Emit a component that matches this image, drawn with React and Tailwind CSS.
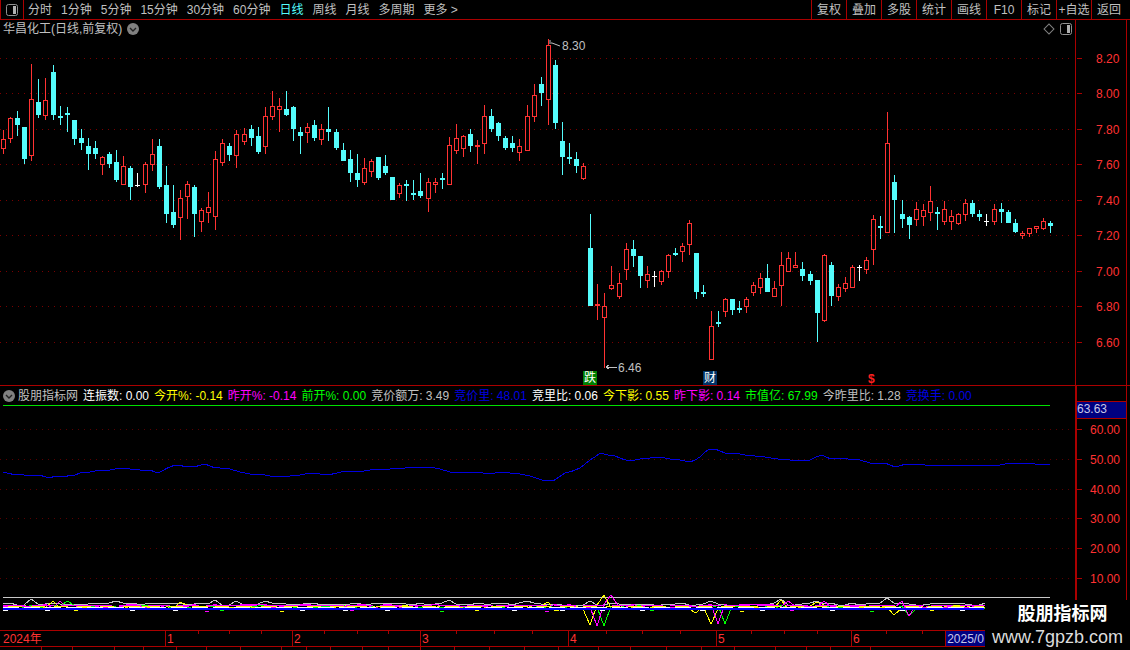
import React from 'react';

const RED = '#ff3232';
const LINE = 'border-[#aa0000]';

// candle rows: type, wick top, body top, body bottom, wick bottom (measured on 3x crops)
const groups = [
  [60, `r 210 238 266 281,r 172 175 238 248,c 153 175 195 228,c 201 201 297 312,r 12 118 288 303,c 57 126 165 174,r 55 121 167 180,c 15 36 165 180,c 138 168 174 195,c 141 159 165 216,c 180 180 237 255,c 207 234 249 270,c 234 258 282 330,c 243 264 282 297,r 288 291 315 345,c 276 282 312 324,c 270 306 360 366,r 288 318 375 375,c 318 324 381 420,w 339 376 379 381,r 306 312 375 399,r 237 282 315 333,c 237 258 381 387,c 318 375 462 489,c 375 456 495 504,r 390 414 474 540,r 363 372 411 477,c 375 381 462 531,r 444 450 486 516,r 396 441 459 489,r 273 297 471 510,r 237 249 309 318,c 249 258 285 303,r 210 222 288 324,r 204 222 246 255,c 195 207 234 258,c 201 228 276 282,r 141 168 261 282,r 93 138 171 180,r 114 138 150 216,c 93 147 165 168,c 138 141 207 243`],
  [35, `c 276 291 303 357,r 264 276 294 324,c 255 270 309 318,r 267 282 315 330,c 216 282 291 318,c 282 291 339 345,c 324 345 378 378,c 345 372 414 441,c 357 414 435 456,r 369 399 444 450,r 372 378 411 426,c 366 366 429 435,c 360 393 414 420,c 426 426 495 495,r 444 450 477 489,c 435 447 450 498,c 435 474 477 495,c 414 468 483 489,r 429 441 492 531,r 429 441 450 474,c 414 429 435 462,r 306 330 450 450,r 267 309 348 357,r 300 303 342 366,c 282 297 333 351,r 315 330 336 388,r 210 243 327 357,c 222 243 282 291,c 261 264 303 318,c 303 309 339 345,c 303 324 339 351,r 312 333 354 378,r 210 243 348 348,r 147 180 246 261,c 126 147 174 213,r 12 30 195 270,c 75 90 264 282,c 261 318 366 420,c 324 366 372 387,c 351 372 393 414,r 384 393 432 435`],
  [205, `c 27 129 303 303,r 237 297 304 345,r 264 303 339 490,r 183 240 252 255,r 204 234 276 282,r 114 132 195 225,c 105 132 153 186,c 153 153 213 249,r 183 207 228 249,w 198 213 216 246,r 195 198 231 240,r 147 150 201 219,c 129 144 150 153,r 114 123 141 171,r 45 54 120 150,c 144 144 261 282,c 240 261 267 276,r 318 363 465 465,c 318 351 357 366,r 279 282 321 336,c 282 282 315 330,c 288 309 315 324,r 276 282 306 324,r 231 240 264 273,r 204 219 249 267,c 177 219 261 261,r 228 249 276 276,r 141 180 243 303,r 141 159 201 201,r 141 180 189 189,c 171 192 213 228,c 198 207 228 240,c 225 225 324 411,r 147 150 348 351,c 171 180 273 303,r 237 246 276 288,r 216 234 252 261,r 180 186 249 249,w 180 186 189 228,r 156 165 195 207`],
  [105, `r 330 342 435 480,c 333 363 369 402,r 21 114 384 384,c 210 231 285 384,c 285 327 342 369,c 333 336 360 402,r 291 312 345 363,r 297 315 336 363,r 243 288 324 348,c 306 321 327 375,r 288 312 351 360,r 315 333 351 375,r 324 327 357 360,r 282 294 330 348,c 285 294 327 336,c 315 327 336 348,w 327 348 351 363,r 297 312 351 360,c 294 312 321 354,c 315 321 354 354,c 342 354 381 384,r 378 384 393 402,r 369 369 387 396,r 363 363 372 384,r 339 348 372 375,c 348 354 363 384`],
];

const candles = groups.flatMap(([off, rows]) =>
  rows.split(',').map((row) => {
    const [t, a, b, c, d] = row.split(' ');
    const y = (v) => Math.round(off + Number(v) / 3);
    return { t, hi: y(a), top: y(b), bot: y(c), lo: y(d) };
  })
);

const blueKnots = '3,472 20,474 35,475 50,478 60,476 75,475 90,472 110,470 130,469 150,470 160,472 175,465 190,466 205,464 220,468 240,472 260,474 280,476 300,475 320,474 345,471 370,470 390,469 420,467 440,469 460,472 490,474 510,473 530,476 553,481 565,473 580,468 590,460 600,453 615,456 630,461 650,458 670,459 690,462 700,457 710,449 725,453 745,455 765,457 790,460 810,460 822,455 835,458 860,460 880,463 895,467 910,464 940,465 970,466 1000,465 1020,463 1050,465'
  .split(' ')
  .map((p) => p.split(',').map(Number));

const noise = (i, seed) => {
  const v = Math.sin(i * 12.9898 + seed) * 43758.5453;
  return v - Math.floor(v);
};

// knots read off the picture, with the day-to-day wiggle put back in
const blueLine = blueKnots
  .flatMap(([x, y], k) => {
    const next = blueKnots[k + 1];
    if (!next) return [`${x},${y}`];
    const mid = (x + next[0]) / 2;
    const midY = Math.round((y + next[1]) / 2 + (noise(k, 7) - 0.5) * 3);
    return [`${x},${y}`, `${mid},${midY}`];
  })
  .join(' ');

const wave = (base, amp, seed, bumps) => {
  const pts = [];
  for (let i = 0; i < 140; i++) {
    const y = bumps[i] ?? base + Math.round((noise(i, seed) - 0.5) * amp);
    pts.push(`${Math.round(3 + 7.075 * i)},${y}`);
  }
  return pts.join(' ');
};

const oscillators = [
  ['#c0c0c0', wave(604, 3, 1, { 4: 599, 16: 601, 30: 600, 33: 601, 37: 601, 63: 600, 74: 601, 83: 601, 100: 601, 110: 599, 115: 601, 125: 598 })],
  ['#ffff00', wave(607, 5, 2, { 7: 601, 25: 602, 77: 602, 78: 611, 83: 625, 85: 595, 98: 613, 100: 624, 110: 600, 115: 602, 126: 615 })],
  ['#00ff00', wave(607, 5, 3, { 9: 601, 85: 626, 102: 624, 128: 616 })],
  ['#ff00ff', wave(606, 4, 4, { 8: 601, 84: 626, 86: 595, 101: 624, 111: 601, 116: 601, 127: 601, 128: 616 })],
];

const mainTicks = [['8.20', 58], ['8.00', 93], ['7.80', 129], ['7.60', 164], ['7.40', 200], ['7.20', 235], ['7.00', 271], ['6.80', 306], ['6.60', 342]];
const subTicks = [['60.00', 429], ['50.00', 459], ['40.00', 489], ['30.00', 518], ['20.00', 548], ['10.00', 578]];

const legend = [
  ['连振数: 0.00', 'text-white'],
  ['今开%: -0.14', 'text-[#ffff00]'],
  ['昨开%: -0.14', 'text-[#ff00ff]'],
  ['前开%: 0.00', 'text-[#00ff00]'],
  ['竞价额万: 3.49', 'text-[#c0c0c0]'],
  ['竞价里: 48.01', 'text-[#0000e0]'],
  ['竞里比: 0.06', 'text-white'],
  ['今下影: 0.55', 'text-[#ffff00]'],
  ['昨下影: 0.14', 'text-[#ff00ff]'],
  ['市值亿: 67.99', 'text-[#00ff00]'],
  ['今昨里比: 1.28', 'text-[#c0c0c0]'],
  ['竞换手: 0.00', 'text-[#0000e0]'],
];

const periods = ['分时', '1分钟', '5分钟', '15分钟', '30分钟', '60分钟', '日线', '周线', '月线', '多周期', '更多 >'];
const tools = ['复权', '叠加', '多股', '统计', '画线', 'F10', '标记', '+自选', '返回'];
const months = [['2024年', 165], ['1', 127], ['2', 128], ['3', 148], ['4', 148], ['5', 135], ['6', 94]];
const minorTicks = [198, 229, 261, 324, 357, 388, 456, 494, 532, 606, 642, 680, 751, 784, 817, 886, 922];
const stripCells = [42, 31, 42, 29, 33, 30, 34, 41, 25, 24, 32, 26, 32, 34, 35, 35, 34, 40, 32, 36, 35, 33, 41, 31, 24, 40];

const Toggle = ({ className }) => (
  <svg viewBox="0 0 12 12" className={className}>
    <rect x="0.5" y="0.5" width="11" height="11" rx="2" fill="none" stroke="#909090" />
    <rect x="7" y="2" width="3" height="8" fill="#b0b0b0" />
  </svg>
);

const Chevron = () => (
  <svg viewBox="0 0 12 12" className="w-3 h-3 shrink-0">
    <circle cx="6" cy="6" r="6" fill="#808080" />
    <path d="M3 5l3 3 3-3" fill="none" stroke="#202020" strokeWidth="1.4" />
  </svg>
);

const Candle = ({ c, i }) => {
  const x = Math.round(3 + 7.075 * i);
  if (c.t === 'w') {
    return (
      <g fill="#ffffff">
        <rect x={x} y={c.hi} width="1" height={c.lo - c.hi} />
        <rect x={x - 2} y={c.top} width="5" height="1" />
      </g>
    );
  }
  const color = c.t === 'r' ? RED : '#54fcfc';
  return (
    <g>
      <rect x={x} y={c.hi} width="1" height={c.lo - c.hi} fill={color} />
      {c.t === 'r' ? (
        <rect x={x - 1.5} y={c.top + 0.5} width="4" height={Math.max(c.bot - c.top - 1, 1)} fill="#000" stroke={color} />
      ) : (
        <rect x={x - 2} y={c.top} width="5" height={Math.max(c.bot - c.top, 2)} fill={color} />
      )}
    </g>
  );
};

const MainChart = () => (
  <svg viewBox="0 20 1074 365" className="w-[1074px] h-[365px] block" shapeRendering="crispEdges">
    {mainTicks.map(([, y]) => (
      <line key={y} x1="0" x2="1074" y1={y + 0.5} y2={y + 0.5} stroke="#7a0000" strokeDasharray="1 5" />
    ))}
    {candles.map((c, i) => <Candle key={i} c={c} i={i} />)}
    <path d="M549 41h2M549 43h3l8 3" fill="none" stroke="#c0c0c0" shapeRendering="auto" />
    <text x="562" y="50" fill="#c0c0c0" fontSize="12">8.30</text>
    <path d="M606 367h11M606 367l3-2M606 367l3 2" fill="none" stroke="#c0c0c0" />
    <text x="618" y="372" fill="#c0c0c0" fontSize="12">6.46</text>
  </svg>
);

const SubChart = () => (
  <svg viewBox="0 405 1074 225" className="w-[1074px] h-[225px] block" shapeRendering="crispEdges">
    {subTicks.map(([, y]) => (
      <line key={y} x1="0" x2="1074" y1={y + 0.5} y2={y + 0.5} stroke="#5a0000" strokeDasharray="1 5" />
    ))}
    <line x1="3" x2="1050" y1="405.5" y2="405.5" stroke="#00e000" />
    <polyline points={blueLine} fill="none" stroke="#0000e0" />
    <line x1="3" x2="1050" y1="597.5" y2="597.5" stroke="#c8c8c8" />
    {oscillators.map(([color, pts]) => (
      <polyline key={color} points={pts} fill="none" stroke={color} />
    ))}
    <line x1="3" x2="984" y1="605.5" y2="605.5" stroke="#ff00ff" strokeDasharray="22 7" />
    <line x1="8" x2="984" y1="606.5" y2="606.5" stroke="#ffff00" strokeDasharray="14 9" />
    <line x1="3" x2="984" y1="607.5" y2="607.5" stroke="#ffffff" strokeDasharray="16 5" />
    <line x1="3" x2="984" y1="609" y2="609" stroke="#0000ff" strokeWidth="2" />
    {[3, 45, 130, 173, 300, 343, 385, 512, 560, 600, 640, 700, 760, 830, 900, 960].map((x) => (
      <rect key={x} x={x} y="610" width="5" height="1" fill="#ffffff" />
    ))}
    {[74, 205, 220, 280, 350, 440, 475, 545, 650, 740, 790, 870, 930].map((x, i) => (
      <rect key={x} x={x} y={610 + (i % 2)} width="4" height="1" fill={['#ffff00', '#ff00ff', '#00ff00'][i % 3]} />
    ))}
  </svg>
);

const Axis = ({ ticks, viewBox, className, labelX }) => (
  <svg viewBox={viewBox} className={className} shapeRendering="crispEdges">
    {ticks.map(([label, y]) => (
      <g key={y}>
        <line x1="1077" x2="1082" y1={y + 0.5} y2={y + 0.5} stroke="#aa0000" />
        <text x={labelX} y={y + 5} fill={RED} fontSize="12" shapeRendering="auto">{label}</text>
      </g>
    ))}
  </svg>
);

const App = () => {
  return (
    <div className="relative w-[1130px] h-[650px] overflow-hidden bg-black text-[12px] leading-[14px] text-[#c0c0c0] font-['Liberation_Sans','Noto_Sans_CJK_SC',sans-serif]">
      {/* top bar */}
      <div className={`flex items-center h-5 border-b ${LINE}`}>
        <div className={`flex items-center justify-center w-6 h-full border-x ${LINE}`}>
          <Toggle className="w-3 h-3" />
        </div>
        <div className="flex items-center gap-[9px] pl-1">
          {periods.map((p) => (
            <span key={p} className={p === '日线' ? 'text-[#54fcfc]' : ''}>{p}</span>
          ))}
        </div>
        <div className="flex h-full ml-auto mr-[4px]">
          {tools.map((t) => (
            <div key={t} className={`flex items-center justify-center w-[35px] border-l ${LINE} whitespace-nowrap`}>{t}</div>
          ))}
        </div>
      </div>

      {/* price chart */}
      <div className="flex h-[365px]">
        <div className="relative w-[1075px]">
          <MainChart />
          <div className="absolute left-[3px] top-[2px] flex items-center gap-[5px]">
            <span>华昌化工(日线,前复权)</span>
            <Chevron />
          </div>
          <div className="absolute right-[3px] top-[3px] flex items-center gap-[7px]">
            <span className="w-2 h-2 rotate-45 border border-[#808080]" />
            <Toggle className="w-3 h-3" />
          </div>
          <div className="absolute left-[583px] top-[351px] w-[14px] h-[14px] bg-[#008000] text-white text-[12px] leading-[14px] text-center">跌</div>
          <div className="absolute left-[703px] top-[351px] w-[14px] h-[14px] bg-[#003366] text-white text-[12px] leading-[14px] text-center">财</div>
          <div className="absolute left-[868px] top-[352px] text-[#ff2020] font-bold text-[12px] leading-[14px]">$</div>
        </div>
        <div className={`w-[52px] border-x ${LINE}`}>
          <Axis ticks={mainTicks} viewBox="1076 20 50 365" className="w-[50px] h-[365px] block" labelX="1096" />
        </div>
      </div>

      {/* indicator panel */}
      <div className={`flex h-[245px] border-t ${LINE}`}>
        <div className="w-[1075px]">
          <div className="flex items-center h-[19px] pl-[3px] gap-[5px] whitespace-nowrap">
            <div className="flex items-center gap-[3px]">
              <Chevron />
              <span>股朋指标网</span>
            </div>
            {legend.map(([text, color]) => (
              <span key={text} className={color}>{text}</span>
            ))}
          </div>
          <SubChart />
        </div>
        <div className={`w-[52px] border-l-2 border-r ${LINE}`}>
          <div className={`h-[16px] border-b ${LINE}`} />
          <div className={`h-[17px] bg-[#000080] border-b ${LINE} text-[#c8c8e8]`}>63.63</div>
          <Axis ticks={subTicks} viewBox="1077 419 49 212" className="w-[49px] h-[212px] block" labelX="1090" />
        </div>
      </div>

      {/* time axis */}
      <div className={`relative flex w-[985px] h-[17px] border-y ${LINE}`}>
        {months.map(([m, w], i) => (
          <div key={m} style={{ width: w }} className={`flex items-center text-[#ff3232] ${i === 0 ? 'pl-[3px]' : `pl-px border-l ${LINE}`}`}>{m}</div>
        ))}
        <div className={`flex items-center justify-center w-[40px] bg-[#000080] border-l ${LINE} text-[#c8c8e8]`}>2025/0</div>
        {minorTicks.map((x) => (
          <span key={x} style={{ left: x }} className="absolute top-0 w-px h-[3px] bg-[#aa0000]" />
        ))}
      </div>

      {/* tab strip, cut off by the window */}
      <div className="flex h-[3px] w-[985px] overflow-hidden">
        {stripCells.map((w, i) => (
          <div key={i} style={{ width: w }} className={`h-full border-r ${LINE} shrink-0`} />
        ))}
      </div>

      {/* watermark */}
      <div className="absolute left-[985px] top-[600px] flex flex-col items-center w-[145px] h-[50px] pt-[4px] bg-black">
        <span className="ml-[10px] text-[18px] leading-[20px] font-bold text-white">股朋指标网</span>
        <span className="mt-[3px] text-[18px] leading-[20px] text-[#dcdcdc]">www.7gpzb.com</span>
      </div>
    </div>
  );
};

export default App;
